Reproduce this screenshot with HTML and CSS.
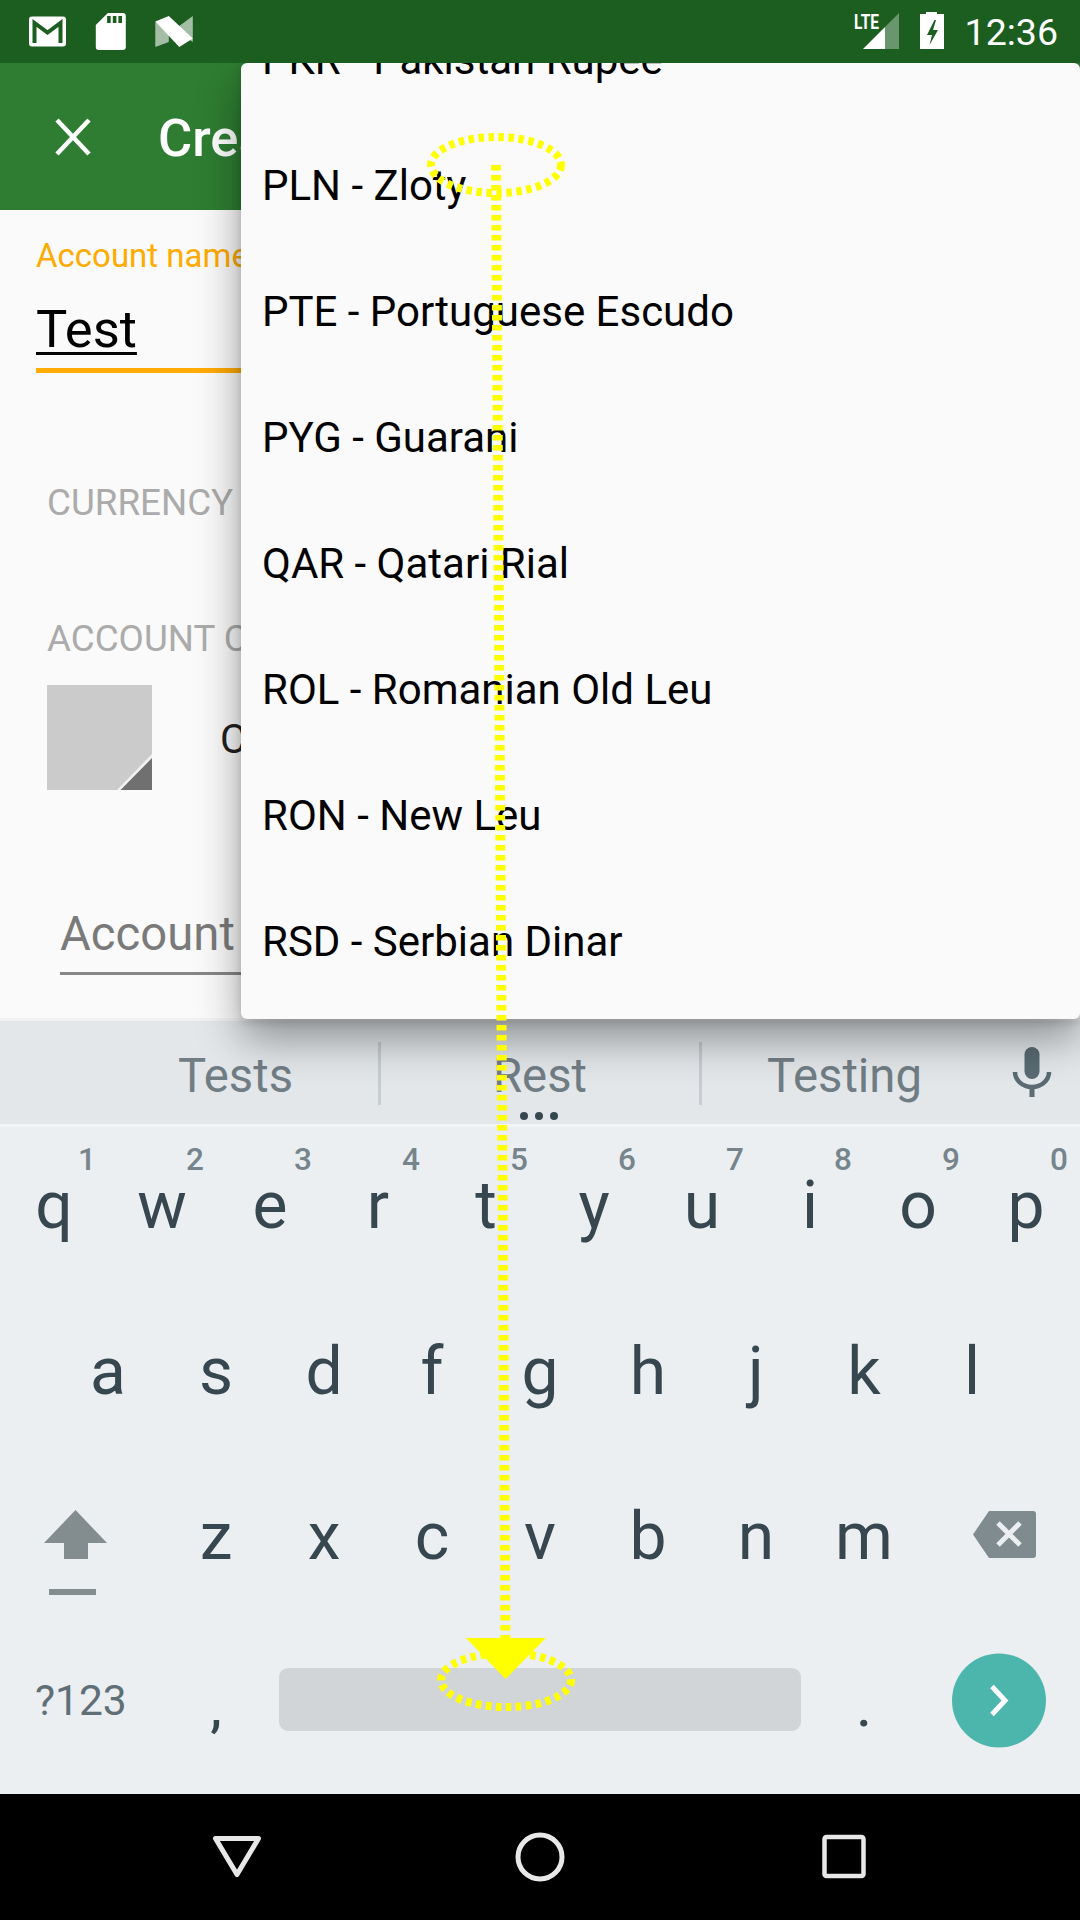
FILE: index.html
```html
<!DOCTYPE html>
<html lang="en">
<head>
<meta charset="utf-8">
<title>Create account</title>
<link rel="stylesheet" href="styles.css">
</head>
<body>
<div class="phone">
  <header class="statusbar">
    <div class="status-left">
      <svg class="si" width="37" height="63" viewBox="29 0 37 63"><rect x="29" y="16.5" width="37" height="30" rx="3" fill="#fff"/><path d="M34.5 43V23l13 9.5 13-9.5v20" fill="none" stroke="#1b5e20" stroke-width="4"/></svg>
      <svg class="si" width="30" height="63" viewBox="95.7 0 30 63"><path d="M107.5 13h15a3 3 0 0 1 3 3v31a3 3 0 0 1-3 3h-24a3 3 0 0 1-3-3V25z" fill="#fff"/><path d="M106.8 16h3.6v7h-3.6zM112.5 16h3.6v7h-3.6zM118.1 16h3.6v7h-3.6z" fill="#1b5e20"/></svg>
      <svg class="si" width="38" height="63" viewBox="154.7 0 38 63"><path d="M155 22l13.500 9v11l-13.500 5zM179 26l13.500-10v26l-13.500-9z" fill="#fff" fill-opacity=".6"/><path d="M155 21.500L168.500 16l24 22.500-13.500 8.500z" fill="#fff"/></svg>
    </div>
    <div class="status-right">
      <svg class="si" width="45" height="63" viewBox="855 0 45 63"><text class="lte" x="855" y="29" textLength="25" lengthAdjust="spacingAndGlyphs">LTE</text><path d="M864 49l22-22v22z" fill="#fff"/><path d="M886 27l14-14v36h-14z" fill="#fff" fill-opacity=".35"/></svg>
      <svg class="si" width="24" height="63" viewBox="922 0 24 63"><path d="M928 14v-2h11v2h7v35h-24V14z" fill="#fff"/><path d="M936.500 20l-7.500 15h5l-2.500 10 8.500-15h-5l3-10z" fill="#1b5e20"/></svg>
      <span class="clock">12:36</span>
    </div>
  </header>

  <main class="app">
    <div class="toolbar">
      <svg class="close" width="36" height="38" viewBox="0 0 36 38"><path d="M2 2l32 34M34 2L2 36" stroke="#fff" stroke-width="4.500" fill="none"/></svg>
      <h1 class="title">Create</h1>
    </div>
    <form class="form">
      <label class="float-label">Account name</label>
      <div class="name-value"><span class="composing">Test</span></div>
      <div class="focus-line"></div>
      <div class="section currency">CURRENCY</div>
      <div class="section account-color">ACCOUNT COLOR</div>
      <div class="color-row">
        <svg class="swatch" width="105" height="105" viewBox="0 0 105 105"><rect width="105" height="105" fill="#cbcbcb"/><path d="M105 69L70 105h35z" fill="#f2f2f2"/><path d="M105 73L73.500 105H105z" fill="#707070"/></svg>
        <span class="color-text">Color</span>
      </div>
      <div class="desc-field">Account</div>
      <div class="desc-line"></div>
    </form>

    <div class="menu">
      <ul class="menu-list">
        <li>PKR - Pakistan Rupee</li>
        <li>PLN - Zloty</li>
        <li>PTE - Portuguese Escudo</li>
        <li>PYG - Guarani</li>
        <li>QAR - Qatari Rial</li>
        <li>ROL - Romanian Old Leu</li>
        <li>RON - New Leu</li>
        <li>RSD - Serbian Dinar</li>
      </ul>
    </div>
  </main>

  <section class="keyboard">
    <div class="strip">
      <div class="suggestions">
        <div class="sug">Tests</div>
        <div class="sug sep">Rest</div>
        <div class="sug sep">Testing</div>
        <svg class="mic" width="93" height="63" viewBox="987 1042 93 63"><rect x="1024.500" y="1047" width="15" height="32" rx="7.500" fill="#5a6b73"/><path d="M1015 1072a17 15 0 0 0 34 0" fill="none" stroke="#5a6b73" stroke-width="4.500"/><path d="M1032 1086v11" stroke="#5a6b73" stroke-width="5"/></svg>
      </div>
      <div class="more"><span></span><span></span><span></span></div>
    </div>
    <div class="keys">
      <div class="row row-10">
        <div class="key">q<sup class="hint">1</sup></div>
        <div class="key">w<sup class="hint">2</sup></div>
        <div class="key">e<sup class="hint">3</sup></div>
        <div class="key">r<sup class="hint">4</sup></div>
        <div class="key">t<sup class="hint">5</sup></div>
        <div class="key">y<sup class="hint">6</sup></div>
        <div class="key">u<sup class="hint">7</sup></div>
        <div class="key">i<sup class="hint">8</sup></div>
        <div class="key">o<sup class="hint">9</sup></div>
        <div class="key">p<sup class="hint">0</sup></div>
      </div>
      <div class="row row-9">
        <div class="key">a</div><div class="key">s</div><div class="key">d</div><div class="key">f</div><div class="key">g</div><div class="key">h</div><div class="key">j</div><div class="key">k</div><div class="key">l</div>
      </div>
      <div class="row row-7">
        <svg class="kicon" width="162" height="165.500" viewBox="0 1458 162 165.500"><path d="M75.500 1510L107 1543H88v16H64v-16H44z" fill="#838d90"/><rect x="49" y="1589" width="47" height="6" fill="#838d90"/></svg>
        <div class="key">z</div><div class="key">x</div><div class="key">c</div><div class="key">v</div><div class="key">b</div><div class="key">n</div><div class="key">m</div>
        <svg class="kicon" width="162" height="165.500" viewBox="918 1458 162 165.500"><path d="M989 1511h44a3 3 0 0 1 3 3v41a3 3 0 0 1-3 3h-44l-16-23.500z" fill="#7f8b8e"/><path d="M998 1523l22 22M1020 1523l-22 22" stroke="#eceff1" stroke-width="5" fill="none"/></svg>
      </div>
      <div class="row row-bottom">
        <div class="key sym">?123</div>
        <div class="key punct">,</div>
        <div class="space-cell"><div class="spacebar"></div></div>
        <div class="key punct">.</div>
        <svg class="kicon" width="162" height="170.500" viewBox="918 1623.500 162 170.500"><circle cx="999" cy="1700" r="47" fill="#4db6ac"/><path d="M992 1686l13 14-13 14" fill="none" stroke="#fff" stroke-width="5"/></svg>
      </div>
    </div>
  </section>

  <nav class="navbar">
    <svg width="60" height="60" viewBox="0 0 60 60"><path d="M8.500 11.500h43L30 47.500z" fill="none" stroke="#e8e8e8" stroke-width="5" stroke-linejoin="round"/></svg>
    <svg width="60" height="60" viewBox="0 0 60 60"><circle cx="30" cy="30" r="22" fill="none" stroke="#e8e8e8" stroke-width="5"/></svg>
    <svg width="60" height="60" viewBox="0 0 60 60"><rect x="10.500" y="10" width="39" height="39" rx="2" fill="none" stroke="#e8e8e8" stroke-width="4.500"/></svg>
  </nav>

  <svg class="gesture" width="1080" height="1920" viewBox="0 0 1080 1920">
    <g fill="none" stroke="#ffff00">
      <ellipse cx="496" cy="165" rx="65" ry="28" stroke-width="8" stroke-dasharray="5.500 4.500"/>
      <ellipse cx="506" cy="1680" rx="65" ry="27" stroke-width="8" stroke-dasharray="5.500 4.500"/>
      <path d="M496 165L505.500 1650" stroke-width="10" stroke-dasharray="5.500 4.500"/>
    </g>
    <path d="M466 1638h80l-40.500 41z" fill="#ffff00"/>
  </svg>
</div>
</body>
</html>
```

FILE: styles.css
```css
* { box-sizing: border-box; }
html, body { margin: 0; padding: 0; }
body { font-family: Roboto, "Liberation Sans", sans-serif; background: #000; }

.phone {
  position: relative;
  width: 1080px;
  height: 1920px;
  overflow: hidden;
  display: flex;
  flex-direction: column;
}

/* status bar */
.statusbar {
  position: relative;
  z-index: 3;
  height: 63px;
  flex: none;
  background: #1b5e20;
  display: flex;
  justify-content: space-between;
  align-items: center;
  padding: 0 22px 0 29px;
}
.status-left { display: flex; gap: 29.5px; }
.status-right { display: flex; align-items: center; gap: 21px; }
.si { display: block; overflow: visible; }
.lte { font: 700 21px "Roboto", sans-serif; fill: #fff; }
.clock { color: #fff; font-size: 37.5px; line-height: 63px; height: 63px; padding-top: 1px; }

/* app */
.app {
  position: relative;
  z-index: 2;
  height: 958px;
  flex: none;
  display: flex;
  flex-direction: column;
}
.toolbar {
  height: 147px;
  flex: none;
  background: #2e7d32;
  display: flex;
  align-items: center;
  gap: 67px;
  padding-left: 55px;
}
.close { display: block; }
.title {
  margin: 0;
  padding-top: 3px;
  color: #fff;
  font-size: 52.5px;
  font-weight: 500;
}
.form {
  flex: 1;
  background: #fafafa;
  border-bottom: 3px solid #f0f1f2;
  padding: 27px 36px 0;
}
.float-label { display: block; color: #ffab00; font-size: 33px; line-height: 38px; }
.name-value { margin-top: 24px; font-size: 52.5px; line-height: 60px; color: #000; }
.composing {
  text-decoration: underline;
  text-decoration-thickness: 3px;
  text-underline-offset: 5px;
  text-decoration-skip-ink: none;
}
.focus-line { margin-top: 9px; height: 5px; background: #ffab00; }
.section {
  color: #ababab;
  font-size: 36.75px;
  line-height: 44px;
  padding-left: 11px;
}
.currency { margin-top: 107.5px; }
.account-color { margin-top: 92.5px; }
.color-row { display: flex; align-items: center; gap: 68px; margin: 24px 0 0 11px; }
.swatch { display: block; flex: none; }
.color-text { color: #212121; font-size: 40.5px; padding-top: 3px; }
.desc-field { margin: 116px 0 0 24px; color: #7a7a7a; font-size: 47.25px; line-height: 56px; }
.desc-line { margin: 10px 0 0 24px; height: 3px; background: #868686; }

/* dropdown */
.menu {
  position: absolute;
  top: 0;
  left: 241px;
  right: 0;
  height: 956px;
  background: #fafafa;
  border-radius: 6px;
  overflow: hidden;
  box-shadow: 0 20px 44px rgba(0, 0, 0, .38), 0 3px 10px rgba(0, 0, 0, .14);
}
.menu-list { list-style: none; margin: -66.300px 0 0; padding: 0; }
.menu-list li {
  height: 126px;
  line-height: 126px;
  padding-left: 21px;
  font-size: 42px;
  color: #000;
  white-space: nowrap;
}

/* keyboard */
.keyboard { flex: 1; background: #eceff1; display: flex; flex-direction: column; }
.strip {
  height: 106px;
  flex: none;
  background: #e3e7ea;
  border-bottom: 3px solid #f2f4f5;
  padding-top: 21px;
}
.suggestions { display: grid; grid-template-columns: 285px 321px 288px 93px; padding-left: 93px; height: 63px; }
.sug {
  text-align: center;
  color: #717d84;
  font-size: 47.25px;
  line-height: 69px;
  height: 63px;
}
.sep { border-left: 3px solid #c7ccd0; }
.mic { display: block; overflow: visible; }
.more { display: flex; justify-content: center; gap: 7px; margin-top: 7px; padding-right: 2px; }
.more span { width: 8px; height: 8px; border-radius: 50%; background: #37474f; }

.keys { flex: 1; display: flex; flex-direction: column; }
.row { display: grid; height: 165.500px; flex: none; }
.row-10 { grid-template-columns: repeat(10, 108px); }
.row-9 { grid-template-columns: repeat(9, 108px); padding-left: 54px; }
.row-7 { grid-template-columns: 162px repeat(7, 108px) 162px; }
.row-bottom { grid-template-columns: 162px 108px 540px 108px 162px; height: 170.500px; }
.key {
  position: relative;
  text-align: center;
  color: #37474f;
  font-size: 66px;
  line-height: 157px;
}
.hint {
  position: absolute;
  top: 18px;
  right: 6px;
  width: 30px;
  font-size: 31.5px;
  font-weight: 500;
  line-height: 30px;
  color: #76848c;
}
.kicon { display: block; }
.sym { color: #5f6f77; font-size: 42.5px; line-height: 154px; text-align: left; padding-left: 35px; }
.punct { font-weight: 500; font-size: 52px; line-height: 170px; }
.space-cell { padding: 44.500px 9px 0; }
.spacebar { height: 63px; background: #d1d5d8; border-radius: 9px; }

/* nav */
.navbar {
  height: 126px;
  flex: none;
  background: #000;
  display: flex;
  justify-content: center;
  align-items: center;
  gap: 243.500px;
}

/* gesture overlay */
.gesture { position: absolute; top: 0; left: 0; z-index: 5; pointer-events: none; }
```
